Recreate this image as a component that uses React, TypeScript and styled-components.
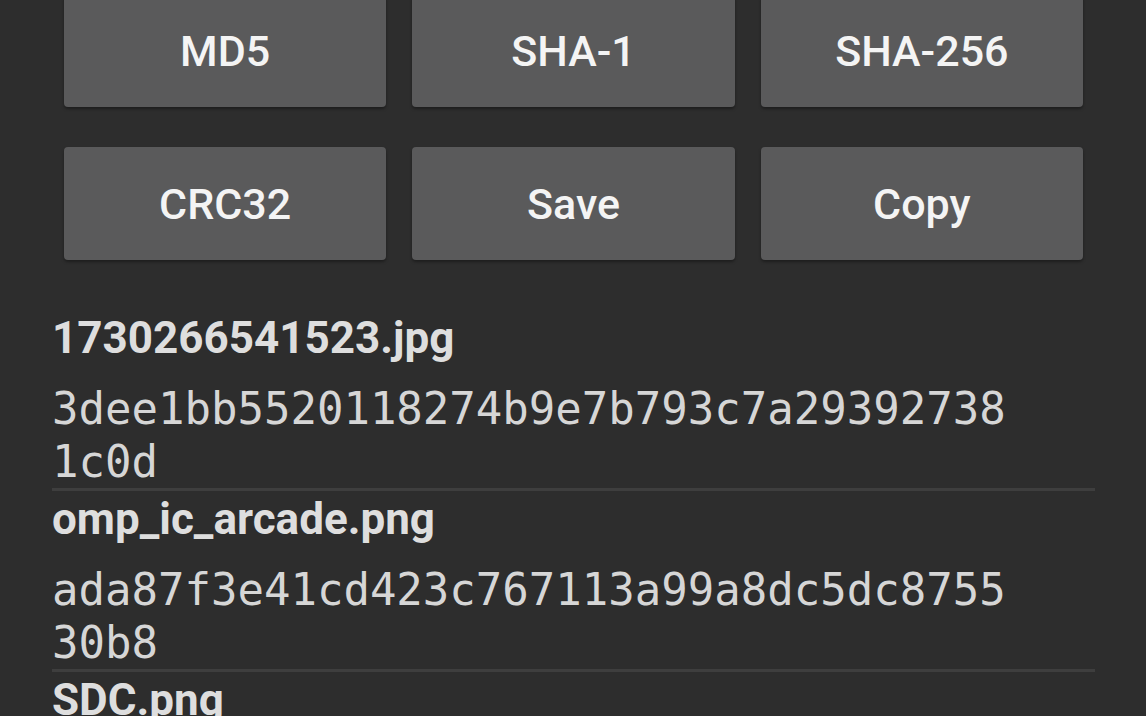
import styled, { createGlobalStyle } from "styled-components";

const GlobalStyle = createGlobalStyle`
  html, body {
    margin: 0;
    padding: 0;
    background: #2d2d2d;
    overflow: hidden;
  }
`;

type HashItem = {
  name: string;
  hash: string;
};

const buttons = ["MD5", "SHA-1", "SHA-256", "CRC32", "Save", "Copy"];

const items: HashItem[] = [
  { name: "1730266541523.jpg", hash: "3dee1bb5520118274b9e7b793c7a29392738 1c0d" },
  { name: "omp_ic_arcade.png", hash: "ada87f3e41cd423c767113a99a8dc5dc8755 30b8" },
  { name: "SDC.png", hash: "" },
];

const App = () => {
  return (
    <>
      <GlobalStyle />
      <Page>
        <ButtonGrid>
          {buttons.map((label) => (
            <ActionButton key={label}>{label}</ActionButton>
          ))}
        </ButtonGrid>
        <FileList>
          {items.map((item) => (
            <FileItem key={item.name}>
              <FileName>{item.name}</FileName>
              {item.hash && (
                <HashText>
                  {item.hash.split(" ").map((part) => (
                    <HashLine key={part}>{part}</HashLine>
                  ))}
                </HashText>
              )}
            </FileItem>
          ))}
        </FileList>
      </Page>
    </>
  );
};

export default App;

const Page = styled.div`
  display: flex;
  flex-direction: column;

  width: 1146px;
  height: 716px;
  padding: 0 51px 0 52px;
  box-sizing: border-box;
`;

const ButtonGrid = styled.section`
  display: grid;
  grid-template-columns: repeat(3, 1fr);
  column-gap: 26px;
  row-gap: 40px;

  margin-top: -6px;
  padding: 0 12px;
`;

const ActionButton = styled.button`
  display: flex;
  justify-content: center;
  align-items: center;

  height: 113px;
  border: none;
  border-radius: 4px;
  background: #5a5a5b;
  box-shadow: 0 2px 3px rgba(0, 0, 0, 0.35);

  color: #f4f4f4;
  font-family: Roboto, "Liberation Sans", sans-serif;
  font-size: 43px;
  font-weight: 500;
`;

const FileList = styled.section`
  display: flex;
  flex-direction: column;

  margin-top: 50px;
`;

const FileItem = styled.article`
  display: flex;
  flex-direction: column;

  border-bottom: 3px solid #3e3e3e;
`;

const FileName = styled.h2`
  margin: 0;

  color: #dedede;
  font-family: Roboto, "Liberation Sans", sans-serif;
  font-size: 44px;
  font-weight: 700;
  line-height: 56px;
`;

const HashText = styled.p`
  display: flex;
  flex-direction: column;

  margin: 16px 0 0;
`;

const HashLine = styled.span`
  color: #d6d6d6;
  font-family: "DejaVu Sans Mono", "Liberation Mono", monospace;
  font-size: 44px;
  line-height: 53px;
`;
